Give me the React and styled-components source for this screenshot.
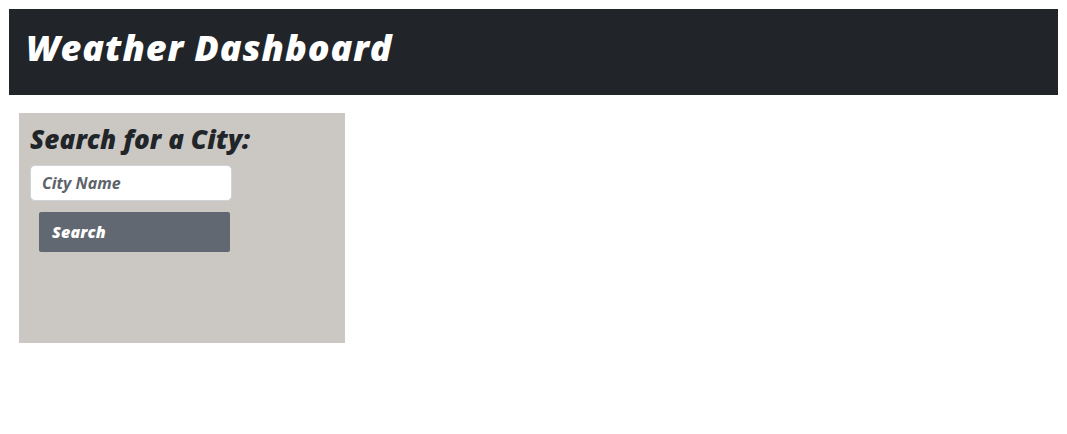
import styled, { createGlobalStyle } from "styled-components";

const GlobalStyle = createGlobalStyle`
  body {
    margin: 0;
    padding: 9px;
    background: #ffffff;
    font-family: "Open Sans", "Liberation Sans", sans-serif;
  }
`;

const Header = styled.header`
  background: #212529;
  height: 86px;
  display: flex;
  align-items: center;
  padding: 0 17px;
  box-sizing: border-box;
`;

const Title = styled.h1`
  margin: 0 0 10px;
  color: #ffffff;
  font-size: 36px;
  font-weight: 800;
  font-style: italic;
  letter-spacing: 0.9px;
`;

const Main = styled.main`
  display: flex;
  padding: 18px 10px;
`;

const SearchPanel = styled.section`
  background: #cbc8c3;
  width: 326px;
  height: 230px;
  box-sizing: border-box;
  padding: 8px 11px;
  display: flex;
  flex-direction: column;
  align-items: flex-start;
`;

const Heading = styled.h2`
  margin: 0 0 8px;
  color: #212529;
  font-size: 26px;
  font-weight: 800;
  font-style: italic;
  letter-spacing: 0.1px;
  line-height: 36px;
`;

const CityInput = styled.input`
  width: 202px;
  height: 36px;
  box-sizing: border-box;
  border: 1px solid #ced4da;
  border-radius: 5px;
  background: #fff;
  padding: 0 11px;
  font-family: inherit;
  font-size: 16px;
  font-weight: 700;
  font-style: italic;
  color: #212529;

  &::placeholder {
    color: #5c636a;
  }
`;

const SearchButton = styled.button`
  margin: 11px 0 0 9px;
  width: 191px;
  height: 40px;
  box-sizing: border-box;
  border: none;
  border-radius: 2px;
  background: #626871;
  color: #ffffff;
  text-align: left;
  padding: 0 13px;
  font-family: inherit;
  font-size: 16px;
  font-weight: 800;
  font-style: italic;
  letter-spacing: 0.2px;
`;

export default function App() {
  return (
    <>
      <GlobalStyle />
      <Header>
        <Title>Weather Dashboard</Title>
      </Header>
      <Main>
        <SearchPanel>
          <Heading>Search for a City:</Heading>
          <CityInput placeholder="City Name" />
          <SearchButton>Search</SearchButton>
        </SearchPanel>
      </Main>
    </>
  );
}
